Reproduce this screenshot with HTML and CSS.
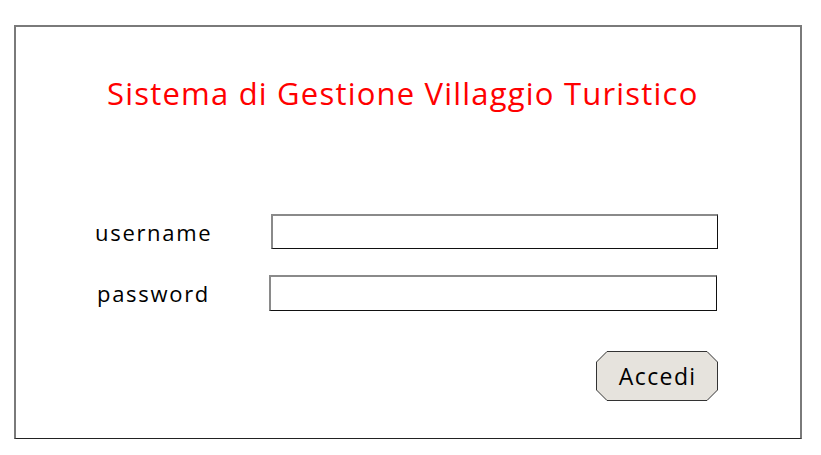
FILE: index.html
```html
<!DOCTYPE html>
<html lang="it">
<head>
<meta charset="utf-8">
<title>Login</title>
<link rel="stylesheet" href="styles.css">
</head>
<body>
<div class="frame">
  <h1 class="title">Sistema di Gestione Villaggio Turistico</h1>
  <div class="row row-user">
    <span class="label">username</span>
    <span class="field field-user"></span>
  </div>
  <div class="row row-pass">
    <span class="label">password</span>
    <span class="field field-pass"></span>
  </div>
  <div class="actions">
    <div class="btn">
      <svg class="btn-shape" width="122" height="50" viewBox="0 0 122 50">
        <polygon points="11,0.5 111,0.5 121.5,11 121.5,39 111,49.5 11,49.5 0.5,39 0.5,11" fill="#e6e3dd" stroke="#333" stroke-width="1"/>
      </svg>
      <span class="btn-text">Accedi</span>
    </div>
  </div>
</div>
</body>
</html>
```
FILE: styles.css
```css
html, body {
  margin: 0;
  padding: 0;
  background: #fff;
}
body {
  width: 821px;
  height: 455px;
  font-family: "Open Sans", Lato, sans-serif;
  font-variant-ligatures: none;
  color: #000;
}
.frame {
  box-sizing: border-box;
  margin: 25px 0 0 14px;
  width: 788px;
  height: 414px;
  border-top: 2px solid #7a7a7a;
  border-left: 2px solid #7a7a7a;
  border-right: 2px solid #7a7a7a;
  border-bottom: 1px solid #222;
  display: flex;
  flex-direction: column;
}
.title {
  margin: 46px 0 0 91px;
  font-weight: normal;
  font-size: 31px;
  letter-spacing: 1.2px;
  line-height: 40px;
  color: #ff0000;
  white-space: nowrap;
}
.row {
  display: flex;
  align-items: center;
}
.label {
  font-size: 22px;
  letter-spacing: 1.7px;
  line-height: 30px;
}
.field {
  box-sizing: border-box;
  display: block;
  border-top: 2px solid #8a8a8a;
  border-left: 2px solid #8a8a8a;
  border-right: 1px solid #111;
  border-bottom: 1px solid #111;
  background: #fff;
}
.row-user {
  margin-top: 101px;
  padding-left: 79px;
}
.row-user .label { width: 176px; }
.field-user { width: 447px; height: 35px; }
.row-pass {
  margin-top: 26px;
  padding-left: 81px;
}
.row-pass .label { width: 172px; }
.field-pass { width: 448px; height: 36px; }
.actions {
  display: flex;
  padding-left: 580px;
  margin-top: 40px;
}
.btn {
  position: relative;
  width: 122px;
  height: 50px;
  display: flex;
  align-items: center;
  justify-content: center;
}
.btn-shape {
  position: absolute;
  left: 0;
  top: 0;
}
.btn-text {
  position: relative;
  font-size: 23px;
  letter-spacing: 1.4px;
  padding-left: 1.4px;
  line-height: 30px;
}
```
